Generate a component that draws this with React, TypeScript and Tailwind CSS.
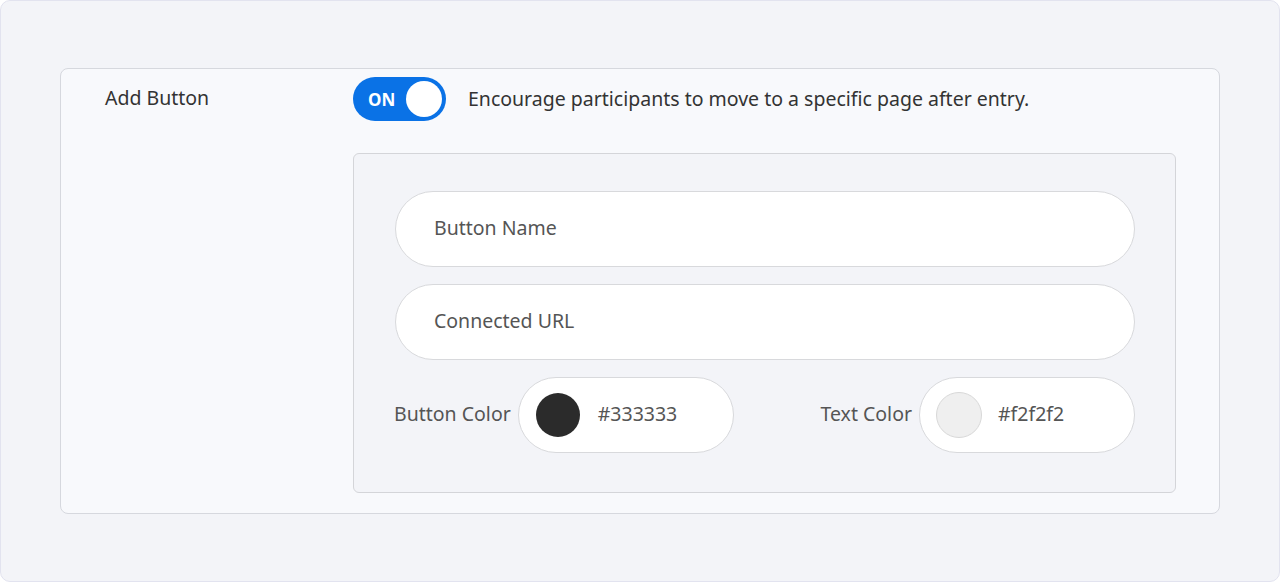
import React from "react";

export default function App() {
  return (
    <div className="w-[1280px] h-[582px] bg-[#f3f4f8] border border-[#e2e3ef] rounded-[10px] pt-[67px] px-[59px] text-[#333]" style={{ fontFamily: '"Noto Sans", "Noto Sans CJK KR", sans-serif' }}>
      <div className="h-[446px] bg-[#f8f9fc] border border-[#d6d8de] rounded-[8px] flex pt-[8px]">
        <div className="w-[292px] pl-[44px] h-[44px] flex items-center text-[19.5px] text-[#333] leading-[26px] -mt-[1px]">Add Button</div>
        <div className="flex flex-col">
          <div className="flex items-center h-[44px]">
            <div className="w-[93px] h-[44px] rounded-full bg-[#0a72e6] flex items-center justify-between pl-[15px] pr-[4px]">
              <span className="text-white text-[17px] font-bold leading-none">ON</span>
              <span className="w-[36px] h-[36px] rounded-full bg-white"></span>
            </div>
            <span className="ml-[22px] text-[19.5px] text-[#333] -mt-[1px]">Encourage participants to move to a specific page after entry.</span>
          </div>
          <div className="mt-[32px] w-[823px] h-[340px] bg-[#f3f4f8] border border-[#d4d5d9] rounded-[6px] pt-[37px] pl-[41px] pr-[40px] flex flex-col gap-[17px]">
            <div className="h-[76px] rounded-full bg-white border border-[#d8d9dc] flex items-center pl-[38px] pb-[3px] text-[19.5px] text-[#555]">Button Name</div>
            <div className="h-[76px] rounded-full bg-white border border-[#d8d9dc] flex items-center pl-[38px] pb-[3px] text-[19.5px] text-[#555]">Connected URL</div>
            <div className="flex items-center justify-between -ml-[1px]">
              <div className="flex items-center gap-[7px]">
                <span className="text-[19.5px] text-[#555] -mt-[2px]">Button Color</span>
                <div className="w-[216px] h-[76px] rounded-full bg-white border border-[#d8d9dc] flex items-center pl-[17px]">
                  <span className="w-[44px] h-[44px] rounded-full bg-[#2b2b2b]"></span>
                  <span className="ml-[18px] text-[19.5px] text-[#555] -mt-[3px]">#333333</span>
                </div>
              </div>
              <div className="flex items-center gap-[7px]">
                <span className="text-[19.5px] text-[#555] -mt-[2px]">Text Color</span>
                <div className="w-[216px] h-[76px] rounded-full bg-white border border-[#d8d9dc] flex items-center pl-[16px]">
                  <span className="w-[46px] h-[46px] rounded-full bg-[#efefef] border border-[#d8d8d8]"></span>
                  <span className="ml-[16px] text-[19.5px] text-[#555] -mt-[3px]">#f2f2f2</span>
                </div>
              </div>
            </div>
          </div>
        </div>
      </div>
    </div>
  );
}
